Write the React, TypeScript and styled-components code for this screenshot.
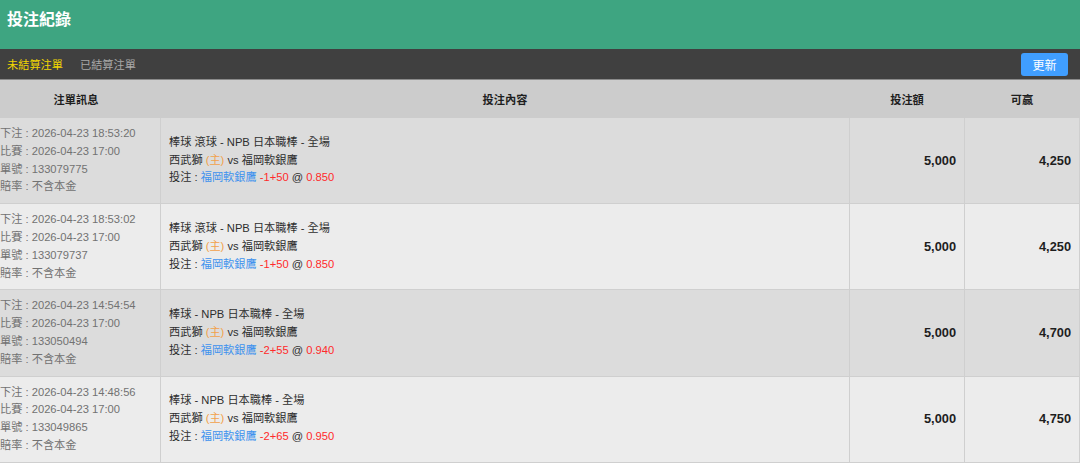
import React from "react";
import styled, { createGlobalStyle } from "styled-components";

const Global = createGlobalStyle`
  html, body { margin: 0; padding: 0; background: #fff; }
  body { font-family: "Liberation Sans", "Noto Sans CJK TC", sans-serif; font-size: 11.2px; overflow: hidden; }
`;

const Page = styled.div`
  width: 1080px;
  height: 463px;
  overflow: hidden;
`;

const TitleBar = styled.div`
  height: 49px;
  box-sizing: border-box;
  background: #3ea581;
  color: #fff;
  font-size: 16px;
  font-weight: bold;
  line-height: 20px;
  padding: 10px 7px 0;
`;

const TabBar = styled.div`
  height: 31px;
  box-sizing: border-box;
  background: #404040;
  border-bottom: 1px solid #8a8a8a;
  display: flex;
  align-items: center;
  padding: 0 12px 0 7px;
  gap: 17px;
`;

const Tab = styled.span<{ $active?: boolean }>`
  color: ${(p) => (p.$active ? "#f2d600" : "#a8a8a8")};
  font-size: 11.2px;
`;

const Spacer = styled.div`
  flex: 1;
`;

const RefreshButton = styled.button`
  width: 47px;
  height: 23px;
  border: none;
  border-radius: 3px;
  background: #409eff;
  color: #fff;
  font-family: inherit;
  font-size: 12px;
  padding: 0;
  margin-top: 1px;
`;

const Table = styled.table`
  border-collapse: collapse;
  table-layout: fixed;
  width: calc(100% + 9px);
  margin-left: -9px;
`;

const HeadCell = styled.th`
  background: #cccccc;
  height: 37px;
  padding: 0;
  font-weight: bold;
  font-size: 11.2px;
  color: #1e1e1e;
  text-align: center;
  border: 1px solid #cccccc;
  border-top: none;
`;

const Row = styled.tr<{ $even: boolean }>`
  background: ${(p) => (p.$even ? "#ececec" : "#dcdcdc")};
`;

const Cell = styled.td`
  border: 1px solid #cfcfcf;
  padding: 7px 8px;
  vertical-align: middle;
  line-height: 17.8px;
`;

const InfoCell = styled(Cell)`
  color: #727272;
  white-space: nowrap;
`;

const ContentCell = styled(Cell)`
  color: #2e2e2e;
`;

const AmountCell = styled(Cell)`
  text-align: right;
  font-weight: bold;
  font-size: 12.8px;
  color: #1e1e1e;
`;

const Line = styled.div``;

const Home = styled.span`
  color: #f2a14a;
`;

const Team = styled.span`
  color: #3f92ee;
`;

const Red = styled.span`
  color: #ff2a2a;
`;

type Bet = {
  placed: string;
  match: string;
  id: string;
  league: string;
  line: string;
  odds: string;
  amount: string;
  win: string;
};

const bets: Bet[] = [
  { placed: "2026-04-23 18:53:20", match: "2026-04-23 17:00", id: "133079775", league: "棒球 滾球 - NPB 日本職棒 - 全場", line: "-1+50", odds: "0.850", amount: "5,000", win: "4,250" },
  { placed: "2026-04-23 18:53:02", match: "2026-04-23 17:00", id: "133079737", league: "棒球 滾球 - NPB 日本職棒 - 全場", line: "-1+50", odds: "0.850", amount: "5,000", win: "4,250" },
  { placed: "2026-04-23 14:54:54", match: "2026-04-23 17:00", id: "133050494", league: "棒球 - NPB 日本職棒 - 全場", line: "-2+55", odds: "0.940", amount: "5,000", win: "4,700" },
  { placed: "2026-04-23 14:48:56", match: "2026-04-23 17:00", id: "133049865", league: "棒球 - NPB 日本職棒 - 全場", line: "-2+65", odds: "0.950", amount: "5,000", win: "4,750" },
];

export default function App() {
  return (
    <Page>
      <Global />
      <TitleBar>投注紀錄</TitleBar>
      <TabBar>
        <Tab $active>未結算注單</Tab>
        <Tab>已結算注單</Tab>
        <Spacer />
        <RefreshButton>更新</RefreshButton>
      </TabBar>
      <Table>
        <colgroup>
          <col style={{ width: 169 }} />
          <col />
          <col style={{ width: 115 }} />
          <col style={{ width: 115 }} />
        </colgroup>
        <thead>
          <tr>
            <HeadCell>注單訊息</HeadCell>
            <HeadCell>投注內容</HeadCell>
            <HeadCell>投注額</HeadCell>
            <HeadCell>可贏</HeadCell>
          </tr>
        </thead>
        <tbody>
          {bets.map((b, i) => (
            <Row key={b.id} $even={i % 2 === 1}>
              <InfoCell>
                <Line>下注 : {b.placed}</Line>
                <Line>比賽 : {b.match}</Line>
                <Line>單號 : {b.id}</Line>
                <Line>賠率 : 不含本金</Line>
              </InfoCell>
              <ContentCell>
                <Line>{b.league}</Line>
                <Line>
                  西武獅 <Home>(主)</Home> vs 福岡軟銀鷹
                </Line>
                <Line>
                  投注 : <Team>福岡軟銀鷹</Team> <Red>{b.line}</Red> @ <Red>{b.odds}</Red>
                </Line>
              </ContentCell>
              <AmountCell>{b.amount}</AmountCell>
              <AmountCell>{b.win}</AmountCell>
            </Row>
          ))}
        </tbody>
      </Table>
    </Page>
  );
}
